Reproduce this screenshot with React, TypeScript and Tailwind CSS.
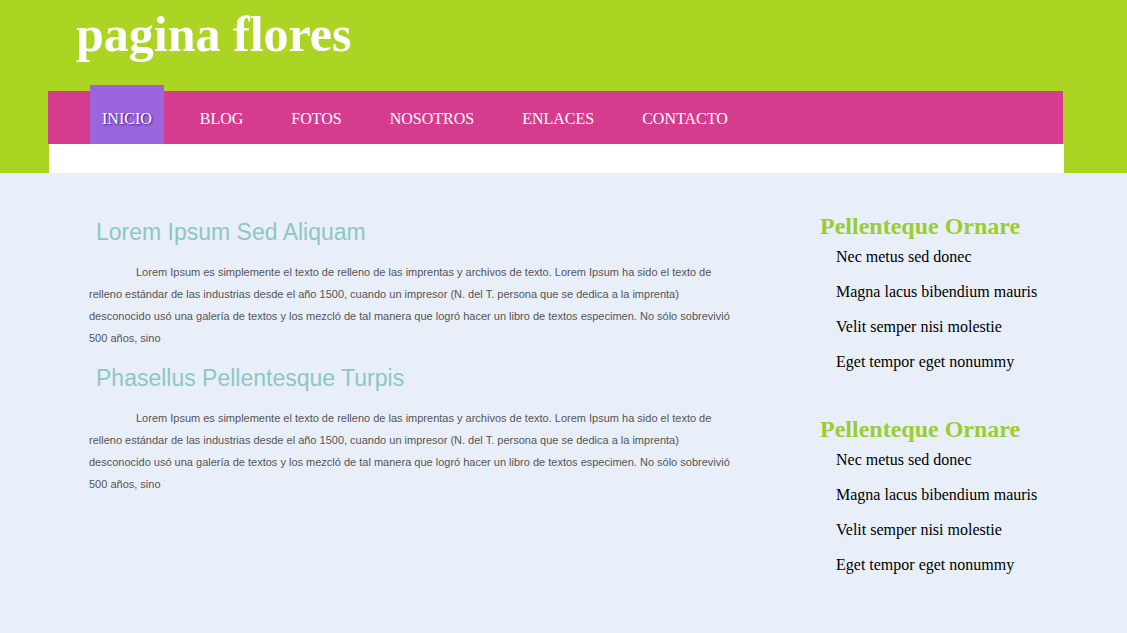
import React from "react";

const serif = "font-['Liberation_Serif','Times_New_Roman',serif]";
const sans = "font-['Liberation_Sans',Arial,sans-serif]";

const navItems = ["INICIO", "BLOG", "FOTOS", "NOSOTROS", "ENLACES", "CONTACTO"];
const listItems = [
  "Nec metus sed donec",
  "Magna lacus bibendium mauris",
  "Velit semper nisi molestie",
  "Eget tempor eget nonummy",
];

const para =
  "Lorem Ipsum es simplemente el texto de relleno de las imprentas y archivos de texto. Lorem Ipsum ha sido el texto de relleno estándar de las industrias desde el año 1500, cuando un impresor (N. del T. persona que se dedica a la imprenta) desconocido usó una galería de textos y los mezcló de tal manera que logró hacer un libro de textos especimen. No sólo sobrevivió 500 años, sino";

function Article({ title, first }: { title: string; first?: boolean }) {
  return (
    <section className={first ? "" : "mt-[15px]"}>
      <h2 className={`${sans} text-[23px] leading-[28px] text-[#8ec6c6] pl-[7px]`}>{title}</h2>
      <p className={`${sans} mt-[15px] text-[11px] leading-[22px] text-[#555555] indent-[47px]`}>{para}</p>
    </section>
  );
}

function SideGroup({ first }: { first?: boolean }) {
  return (
    <div className={first ? "" : "mt-[37px]"}>
      <h3 className={`${serif} font-bold text-[24px] leading-[26px] mt-[2px] text-[#9acd32]`}>Pellenteque Ornare</h3>
      <ul className="pl-[16px]">
        {listItems.map((t) => (
          <li key={t} className={`${serif} text-[16px] leading-[35px] h-[35px] text-black`}>
            {t}
          </li>
        ))}
      </ul>
    </div>
  );
}

export default function App() {
  return (
    <div className="min-h-screen bg-[#e8eff9]">
      <header className="bg-[#acd422]">
        <div className="ml-[48px] w-[1016px]">
          <h1 className={`${serif} font-bold text-white text-[50px] leading-[60px] pt-[4px] pl-[28px]`}>
            pagina flores
          </h1>
          <nav className="mt-[27px] h-[53px] w-[1015px] bg-[#d63c8e]">
            <ul className="flex h-[53px] items-end pl-[42px] gap-[24px]">
              {navItems.map((item, i) =>
                i === 0 ? (
                  <li
                    key={item}
                    className={`${serif} h-[59px] pt-[6px] px-[12px] bg-[#9b65dd] text-white text-[16px] leading-[55px] [text-shadow:1px_1px_2px_#2b1f80]`}
                  >
                    {item}
                  </li>
                ) : (
                  <li key={item} className={`${serif} h-[53px] px-[12px] text-white text-[16px] leading-[55px]`}>
                    {item}
                  </li>
                )
              )}
            </ul>
          </nav>
          <div className="ml-px h-[29px] w-[1015px] bg-white" />
        </div>
      </header>
      <main className="flex items-start pl-[89px]">
        <div className="w-[650px] pt-[45px]">
          <Article title="Lorem Ipsum Sed Aliquam" first />
          <Article title="Phasellus Pellentesque Turpis" />
        </div>
        <aside className="ml-[81px] w-[245px] pt-[38px]">
          <SideGroup first />
          <SideGroup />
        </aside>
      </main>
    </div>
  );
}
